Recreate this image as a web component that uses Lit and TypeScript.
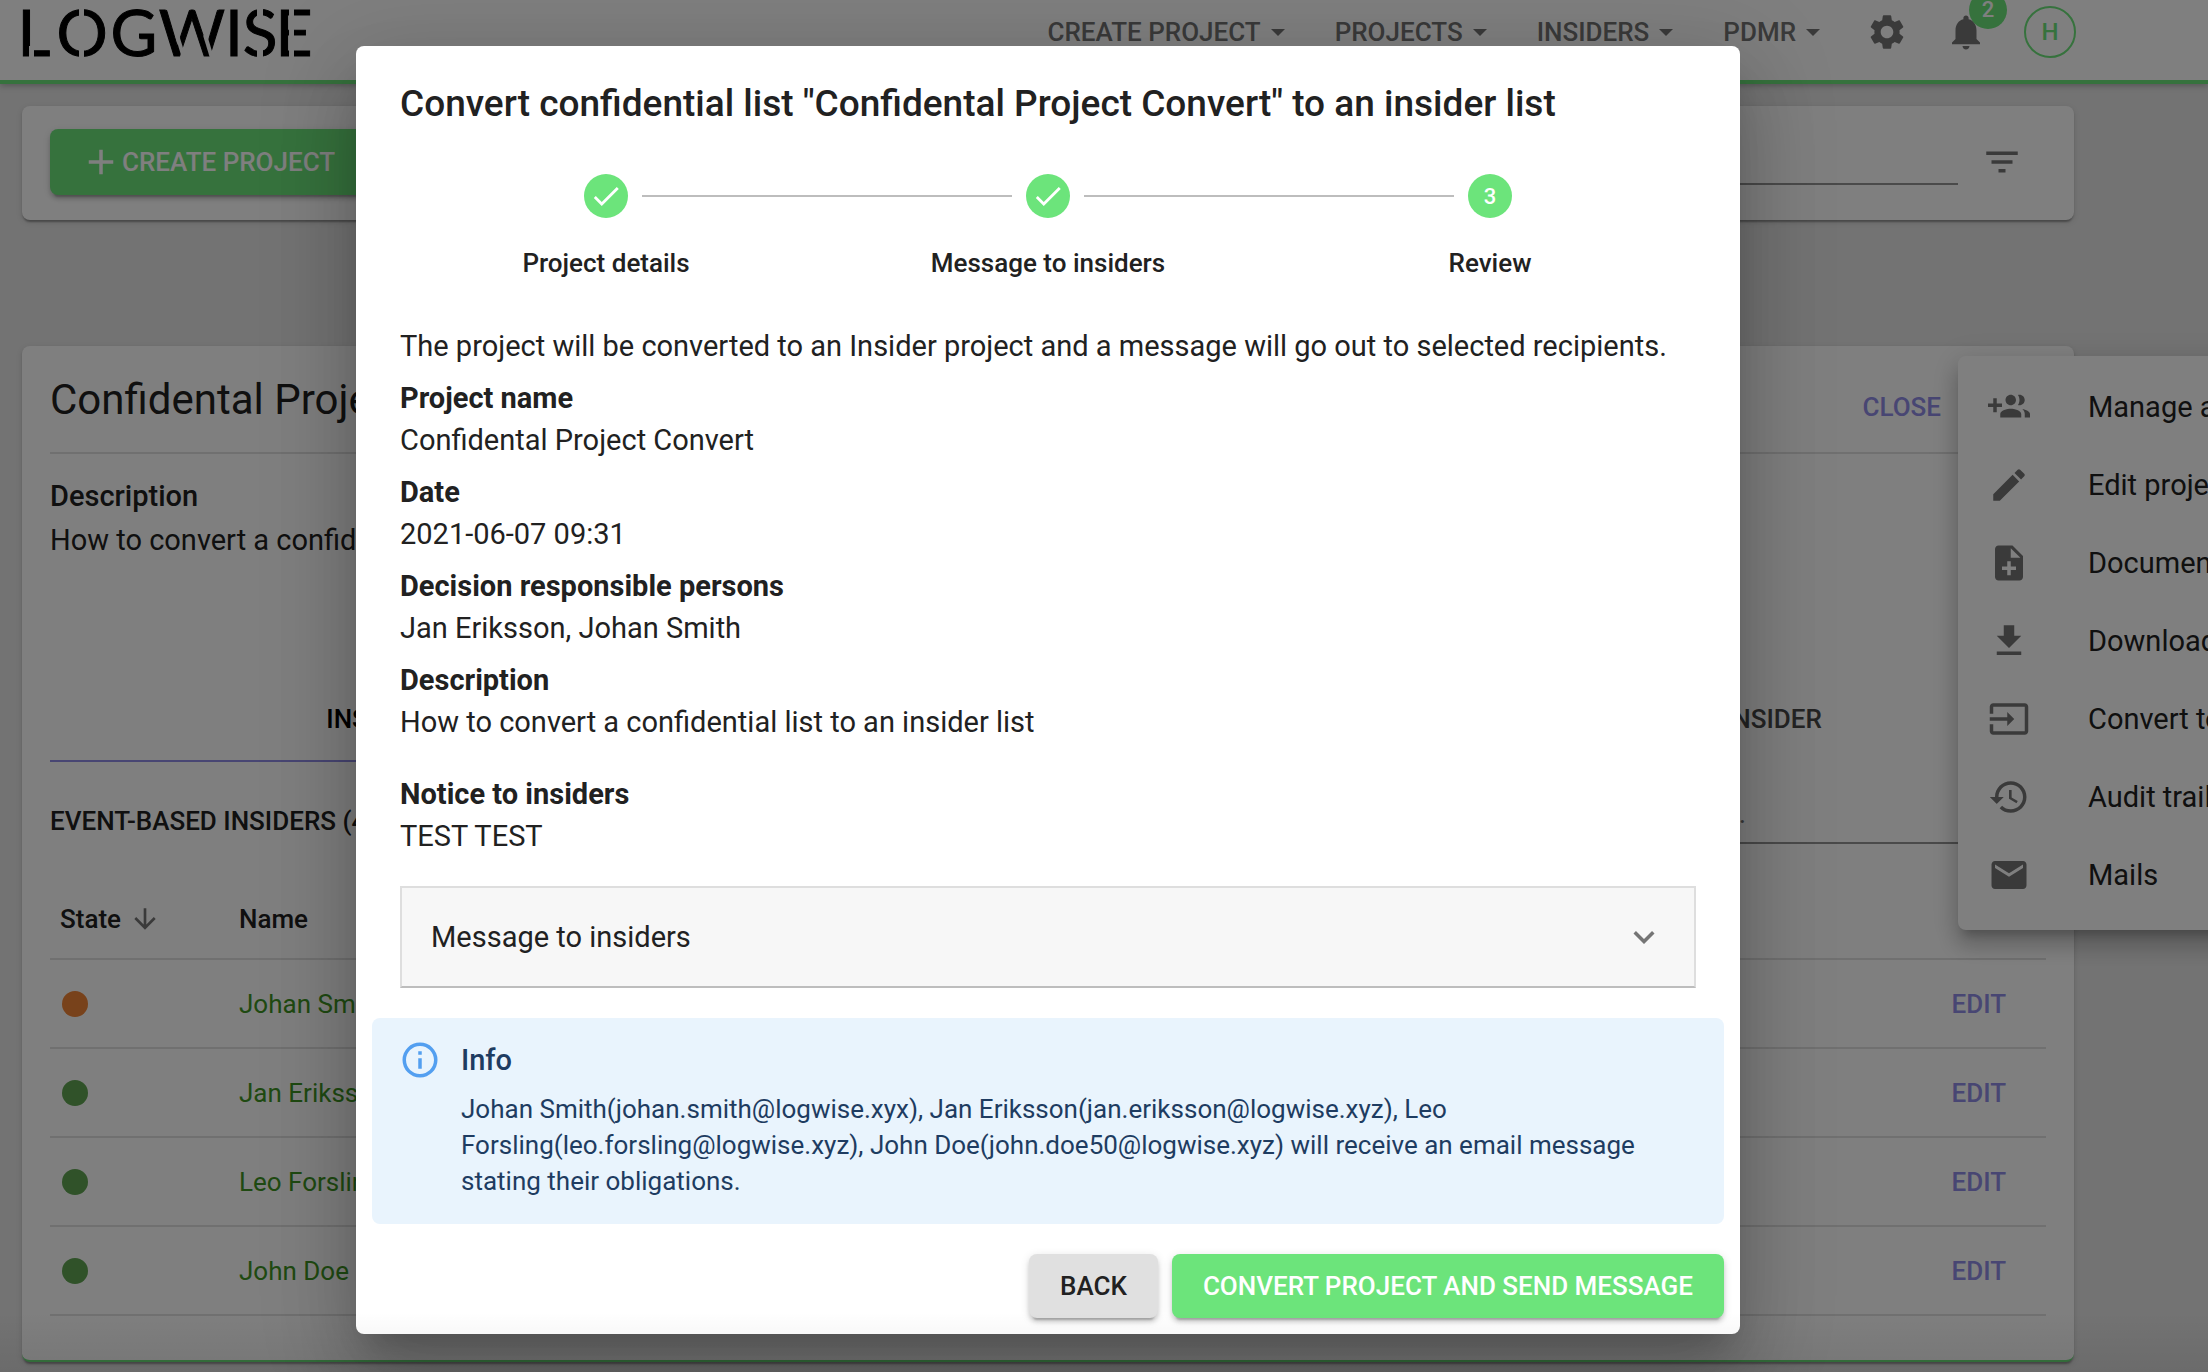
import { LitElement, html, css, svg, nothing } from "lit";
import { customElement, property, state } from "lit/decorators.js";
import { classMap } from "lit/directives/class-map.js";

const ICONS: Record<string, string> = {
  settings:
    "M19.14 12.94c.04-.3.06-.61.06-.94 0-.32-.02-.64-.07-.94l2.03-1.58c.18-.14.23-.41.12-.61l-1.92-3.32c-.12-.22-.37-.29-.59-.22l-2.39.96c-.5-.38-1.03-.7-1.62-.94l-.36-2.54c-.04-.24-.24-.41-.48-.41h-3.84c-.24 0-.43.17-.47.41l-.36 2.54c-.59.24-1.13.57-1.62.94l-2.39-.96c-.22-.08-.47 0-.59.22L2.74 8.87c-.12.21-.08.47.12.61l2.03 1.58c-.05.3-.09.63-.09.94s.02.64.07.94l-2.03 1.58c-.18.14-.23.41-.12.61l1.92 3.32c.12.22.37.29.59.22l2.39-.96c.5.38 1.03.7 1.62.94l.36 2.54c.05.24.24.41.48.41h3.84c.24 0 .44-.17.47-.41l.36-2.54c.59-.24 1.13-.56 1.62-.94l2.39.96c.22.08.47 0 .59-.22l1.92-3.32c.12-.22.07-.47-.12-.61l-2.01-1.58zM12 15.6c-1.98 0-3.6-1.62-3.6-3.6s1.62-3.6 3.6-3.6 3.6 1.62 3.6 3.6-1.62 3.6-3.6 3.6z",
  bell: "M12 22c1.1 0 2-.9 2-2h-4c0 1.1.89 2 2 2zm6-6v-5c0-3.07-1.64-5.64-4.5-6.32V4c0-.83-.67-1.5-1.5-1.5s-1.5.67-1.5 1.5v.68C7.63 5.36 6 7.92 6 11v5l-2 2v1h16v-1l-2-2z",
  add: "M19 13h-6v6h-2v-6H5v-2h6V5h2v6h6v2z",
  filter: "M10 18h4v-2h-4v2zM3 6v2h18V6H3zm3 7h12v-2H6v2z",
  check: "M9 16.2L4.8 12l-1.4 1.4L9 19 21 7l-1.4-1.4L9 16.2z",
  expand: "M16.59 8.59L12 13.17 7.41 8.59 6 10l6 6 6-6z",
  info: "M11,9H13V7H11M12,20C7.59,20 4,16.41 4,12C4,7.59 7.59,4 12,4C16.41,4 20,7.59 20,12C20,16.41 16.41,20 12,20M12,2A10,10 0 0,0 2,12A10,10 0 0,0 12,22A10,10 0 0,0 22,12A10,10 0 0,0 12,2M11,17H13V11H11V17Z",
  arrowDown: "M20 12l-1.41-1.41L13 16.17V4h-2v12.17l-5.58-5.59L4 12l8 8 8-8z",
  groupAdd:
    "M8 10H5V7H3v3H0v2h3v3h2v-3h3v-2zm10 1c1.66 0 2.99-1.34 2.99-3S19.66 5 18 5c-.32 0-.63.05-.91.14.57.81.9 1.79.9 2.86s-.34 2.04-.9 2.86c.28.09.59.14.91.14zm-5 0c1.66 0 2.99-1.34 2.99-3S14.66 5 13 5c-1.66 0-3 1.34-3 3s1.34 3 3 3zm6.62 2.16c.83.73 1.38 1.66 1.38 2.84v2h3v-2c0-1.54-2.37-2.49-4.38-2.84zM13 13c-2 0-6 1-6 3v2h12v-2c0-2-4-3-6-3z",
  edit: "M3 17.25V21h3.75L17.81 9.94l-3.75-3.75L3 17.25zM20.71 7.04c.39-.39.39-1.02 0-1.41l-2.34-2.34c-.39-.39-1.02-.39-1.41 0l-1.83 1.83 3.75 3.75 1.83-1.83z",
  noteAdd:
    "M14 2H6c-1.1 0-1.99.9-1.99 2L4 20c0 1.1.89 2 1.99 2H18c1.1 0 2-.9 2-2V8l-6-6zm2 14h-3v3h-2v-3H8v-2h3v-3h2v3h3v2zm-3-7V3.5L18.5 9H13z",
  download: "M19 9h-4V3H9v6H5l7 7 7-7zM5 18v2h14v-2H5z",
  convert:
    "M21 3.01H3c-1.1 0-2 .9-2 2V9h2V4.99h18v14.03H3V15H1v4.01c0 1.1.9 1.98 2 1.98h18c1.1 0 2-.88 2-1.98v-14c0-1.11-.9-2-2-2zM11 16l4-4-4-4v3H1v2h10v3z",
  history:
    "M13 3c-4.97 0-9 4.03-9 9H1l3.89 3.89.07.14L9 12H6c0-3.87 3.13-7 7-7s7 3.13 7 7-3.13 7-7 7c-1.93 0-3.68-.79-4.94-2.06l-1.42 1.42C8.27 19.99 10.51 21 13 21c4.97 0 9-4.03 9-9s-4.03-9-9-9zm-1 5v5l4.28 2.54.72-1.21-3.5-2.08V8H12z",
  mail: "M20 4H4c-1.1 0-1.99.9-1.99 2L2 18c0 1.1.9 2 2 2h16c1.1 0 2-.9 2-2V6c0-1.1-.9-2-2-2zm0 4l-8 5-8-5V6l8 5 8-5v2z",
};

const icon = (name: string, cls = "") =>
  html`<svg class="icon ${cls}" viewBox="0 0 24 24" aria-hidden="true">${svg`<path d=${ICONS[name]}></path>`}</svg>`;

const base = css`
  :host,
  * {
    box-sizing: border-box;
  }
  button {
    font: inherit;
    color: inherit;
    background: none;
    border: 0;
    padding: 0;
    margin: 0;
    cursor: pointer;
  }
  .icon {
    display: block;
    flex: none;
    width: 42px;
    height: 42px;
    fill: currentColor;
  }
  .raised {
    display: flex;
    align-items: center;
    justify-content: center;
    border-radius: 8px;
    font-size: 26px;
    font-weight: 500;
    white-space: nowrap;
    box-shadow: 0 6px 2px -4px rgba(0, 0, 0, 0.2), 0 4px 4px rgba(0, 0, 0, 0.14), 0 2px 10px rgba(0, 0, 0, 0.12);
  }
  .primary {
    background: #6ce47b;
    color: #fff;
  }
`;

@customElement("site-header")
class SiteHeader extends LitElement {
  static styles = [
    base,
    css`
      :host {
        display: block;
      }
      .bar {
        display: flex;
        align-items: center;
        height: 84px;
        padding: 0 132px 16px 16px;
        background: #fff;
        border-bottom: 4px solid #6ce47b;
        box-shadow: 0 2px 6px rgba(0, 0, 0, 0.25);
        color: #757575;
      }
      .logo {
        display: block;
        width: 300px;
        height: 64px;
      }
      .logo text {
        font-family: Lato, "Liberation Sans", sans-serif;
        font-size: 64px;
        text-anchor: middle;
        stroke: #000;
        stroke-width: 1;
      }
      .logo rect {
        fill: #fff;
      }
      .logo line {
        stroke: #fff;
        stroke-width: 4;
      }
      .nav {
        display: flex;
        gap: 50px;
        margin-left: auto;
      }
      .item {
        display: flex;
        align-items: center;
        gap: 10px;
        font-size: 26px;
        font-weight: 500;
      }
      .caret {
        width: 14px;
        height: 7px;
        fill: currentColor;
      }
      .tools {
        display: flex;
        align-items: center;
        gap: 37px;
        margin-left: 46px;
      }
      .bell {
        position: relative;
      }
      .badge {
        position: absolute;
        top: -20px;
        left: 24px;
        width: 38px;
        height: 38px;
        border-radius: 50%;
        background: #6ce47b;
        color: #fff;
        font-size: 22px;
        font-weight: 500;
        line-height: 38px;
        text-align: center;
      }
      .avatar {
        width: 52px;
        height: 52px;
        border: 2px solid #6ce47b;
        border-radius: 50%;
        color: #6ce47b;
        font-size: 24px;
        font-weight: 500;
      }
    `,
  ];

  private letters = [
    { glyph: "L", x: 18 },
    { glyph: "O", x: 66 },
    { glyph: "G", x: 118 },
    { glyph: "W", x: 176 },
    { glyph: "I", x: 218 },
    { glyph: "S", x: 244 },
    { glyph: "E", x: 278 },
  ];

  render() {
    return html`<header class="bar">
      <svg class="logo" viewBox="0 0 300 64" role="img" aria-label="Logwise">
        ${this.letters.map((l) => svg`<text x=${l.x} y="56">${l.glyph}</text>`)}
        <rect x="13" y="46" width="5" height="12"></rect>
        <rect x="63" y="6" width="5" height="54"></rect>
        <line x1="161" y1="35" x2="168" y2="58"></line>
        <line x1="189" y1="35" x2="196" y2="58"></line>
        <rect x="241" y="6" width="6" height="18"></rect>
        <rect x="241" y="43" width="6" height="17"></rect>
        <rect x="273" y="6" width="5" height="54"></rect>
      </svg>
      <nav class="nav">
        ${["CREATE PROJECT", "PROJECTS", "INSIDERS", "PDMR"].map(
          (label) => html`<button class="item">
            ${label}<svg class="caret" viewBox="0 0 14 7" aria-hidden="true"><path d="M0 0h14l-7 7z"></path></svg>
          </button>`
        )}
      </nav>
      <div class="tools">
        <button aria-label="Settings">${icon("settings")}</button>
        <button class="bell" aria-label="Notifications">${icon("bell")}<span class="badge">2</span></button>
        <button class="avatar">H</button>
      </div>
    </header>`;
  }
}

@customElement("project-menu")
class ProjectMenu extends LitElement {
  static styles = [
    base,
    css`
      :host {
        display: block;
        padding: 12px 0 16px;
        border-radius: 8px;
        background: #fff;
        box-shadow: 0 10px 10px -6px rgba(0, 0, 0, 0.2), 0 16px 20px 2px rgba(0, 0, 0, 0.14),
          0 6px 28px 4px rgba(0, 0, 0, 0.12);
      }
      .item {
        display: flex;
        align-items: center;
        gap: 58px;
        width: 100%;
        height: 78px;
        padding: 0 30px;
        font-size: 29px;
        white-space: nowrap;
      }
      .icon {
        color: #757575;
      }
    `,
  ];

  private items = [
    ["groupAdd", "Manage access"],
    ["edit", "Edit project"],
    ["noteAdd", "Documents"],
    ["download", "Download"],
    ["convert", "Convert to insider list"],
    ["history", "Audit trail"],
    ["mail", "Mails"],
  ];

  render() {
    return this.items.map(([glyph, label]) => html`<button class="item">${icon(glyph)}${label}</button>`);
  }
}

@customElement("project-page")
class ProjectPage extends LitElement {
  static styles = [
    base,
    css`
      :host {
        display: block;
        padding: 22px 134px 10px 22px;
      }
      .card {
        background: #fff;
        border-radius: 8px;
        box-shadow: 0 4px 2px -2px rgba(0, 0, 0, 0.2), 0 2px 2px rgba(0, 0, 0, 0.14), 0 2px 6px rgba(0, 0, 0, 0.12);
      }
      .toolbar {
        display: flex;
        align-items: center;
        justify-content: space-between;
        height: 114px;
        padding: 0 51px 2px 28px;
        margin-bottom: 126px;
      }
      .create {
        height: 66px;
        padding: 0 38px 0 30px;
      }
      .search {
        display: flex;
        align-items: center;
        gap: 23px;
      }
      .field {
        height: 46px;
        padding: 0;
        border: 0;
        border-bottom: 2px solid #949494;
        outline: 0;
        background: transparent;
        font: inherit;
        font-size: 28px;
      }
      .field::placeholder {
        color: #757575;
        opacity: 1;
      }
      .search .field {
        width: 420px;
      }
      .filter {
        color: #757575;
      }
      .project {
        padding: 0 28px 44px;
        border-bottom: 2px solid #6ce47b;
      }
      .head {
        position: relative;
        display: flex;
        align-items: center;
        justify-content: space-between;
        height: 108px;
        padding-right: 105px;
        border-bottom: 2px solid #e0e0e0;
      }
      .title {
        margin: 0;
        font-size: 42px;
        font-weight: 400;
      }
      .link {
        color: #908ce6;
        font-size: 26px;
        font-weight: 500;
      }
      .close {
        padding-top: 16px;
      }
      .menu {
        position: absolute;
        top: 10px;
        left: calc(100% - 88px);
        width: 440px;
      }
      .about {
        padding-top: 20px;
        line-height: 44px;
      }
      .about h3,
      .about p {
        margin: 0;
        font-size: 29px;
      }
      .about h3 {
        font-weight: 500;
      }
      .tabs {
        display: grid;
        grid-template-columns: repeat(3, 1fr);
        margin-top: 116px;
      }
      .tab {
        height: 84px;
        border-bottom: 2px solid transparent;
        color: #484848;
        font-size: 26px;
        font-weight: 500;
      }
      .tab.active {
        color: #000;
        border-color: #908ce6;
      }
      .list-head {
        display: flex;
        align-items: center;
        justify-content: space-between;
        margin: 36px 0;
      }
      .list-head h3 {
        margin: 0;
        font-size: 26px;
        font-weight: 500;
      }
      .list-head .field {
        width: 408px;
        padding-bottom: 14px;
      }
      .table {
        width: 100%;
        border-collapse: separate;
        border-spacing: 0;
        font-size: 26px;
      }
      .table th {
        height: 80px;
        font-weight: 500;
      }
      .table td {
        height: 89px;
      }
      .table th,
      .table td {
        padding: 0;
        border-bottom: 2px solid #e0e0e0;
        text-align: left;
      }
      .table .state {
        width: 189px;
        padding-left: 10px;
      }
      .table .act {
        padding-right: 40px;
        text-align: right;
      }
      .sort {
        display: flex;
        align-items: center;
        gap: 8px;
        font-weight: 500;
      }
      .sort .icon {
        width: 32px;
        height: 32px;
        color: #757575;
      }
      .dot {
        display: block;
        width: 26px;
        height: 26px;
        margin-left: 2px;
        border-radius: 50%;
        background: #60a452;
      }
      .dot.pending {
        background: #f08436;
      }
      .name {
        color: #3e9424;
        text-decoration: none;
      }
    `,
  ];

  private rows = [
    { name: "Johan Smith", pending: true },
    { name: "Jan Eriksson", pending: false },
    { name: "Leo Forsling", pending: false },
    { name: "John Doe", pending: false },
  ];

  render() {
    return html`
      <section class="card toolbar">
        <button class="raised primary create">${icon("add")}CREATE PROJECT</button>
        <div class="search">
          <input class="field" type="search" aria-label="Search projects" />
          <button class="filter" aria-label="Filter">${icon("filter")}</button>
        </div>
      </section>
      <section class="card project">
        <div class="head">
          <h2 class="title">Confidental Project Convert</h2>
          <button class="link close">CLOSE</button>
          <project-menu class="menu"></project-menu>
        </div>
        <div class="about">
          <h3>Description</h3>
          <p>How to convert a confidential list to an insider list</p>
        </div>
        <div class="tabs" role="tablist">
          <button class="tab active" role="tab" aria-selected="true">INSIDERS</button>
          <button class="tab" role="tab">MESSAGES</button>
          <button class="tab" role="tab">ADD NEW INSIDER</button>
        </div>
        <div class="list-head">
          <h3>EVENT-BASED INSIDERS (4)</h3>
          <input class="field" type="text" placeholder="Search..." aria-label="Search insiders" />
        </div>
        <table class="table">
          <thead>
            <tr>
              <th class="state"><button class="sort">State ${icon("arrowDown")}</button></th>
              <th>Name</th>
              <th class="act"></th>
            </tr>
          </thead>
          <tbody>
            ${this.rows.map(
              (row) => html`<tr>
                <td class="state"><span class=${classMap({ dot: true, pending: row.pending })}></span></td>
                <td><a class="name" href="#">${row.name}</a></td>
                <td class="act"><button class="link">EDIT</button></td>
              </tr>`
            )}
          </tbody>
        </table>
      </section>
    `;
  }
}

@customElement("progress-steps")
class ProgressSteps extends LitElement {
  @property({ type: Array }) steps: string[] = [];
  @property({ type: Number }) current = 0;

  static styles = [
    base,
    css`
      :host {
        display: block;
      }
      .steps {
        display: grid;
        grid-template-columns: repeat(3, 1fr);
        margin: 0;
        padding: 0;
        list-style: none;
      }
      .track {
        display: flex;
        align-items: center;
        gap: 14px;
      }
      .line {
        flex: 1;
        height: 2px;
        background: #bdbdbd;
      }
      .line.off {
        background: transparent;
      }
      .mark {
        display: flex;
        align-items: center;
        justify-content: center;
        width: 44px;
        height: 44px;
        border-radius: 50%;
        background: #6ce47b;
        color: #fff;
        font-size: 22px;
        font-weight: 500;
      }
      .mark .icon {
        width: 34px;
        height: 34px;
      }
      .label {
        margin-top: 27px;
        font-size: 26px;
        font-weight: 500;
        line-height: 36px;
        text-align: center;
      }
    `,
  ];

  render() {
    const last = this.steps.length - 1;
    return html`<ol class="steps">
      ${this.steps.map(
        (label, i) => html`<li>
          <div class="track">
            <span class=${classMap({ line: true, off: i === 0 })}></span>
            <span class="mark">${i < this.current ? icon("check") : i + 1}</span>
            <span class=${classMap({ line: true, off: i === last })}></span>
          </div>
          <div class="label">${label}</div>
        </li>`
      )}
    </ol>`;
  }
}

@customElement("convert-dialog")
class ConvertDialog extends LitElement {
  @state() private open = false;

  static styles = [
    base,
    css`
      :host {
        display: block;
        padding: 36px 16px 16px;
        border-radius: 8px;
        background: #fff;
        box-shadow: 0 22px 30px -14px rgba(0, 0, 0, 0.2), 0 48px 76px 6px rgba(0, 0, 0, 0.14),
          0 18px 92px 16px rgba(0, 0, 0, 0.12);
      }
      .title {
        margin: 0 28px;
        font-size: 37px;
        font-weight: 500;
        line-height: 44px;
      }
      .steps {
        margin: 48px 13px 44px;
      }
      .body {
        margin: 0 28px;
        font-size: 29px;
        line-height: 42px;
      }
      .intro {
        margin: 0 0 10px;
      }
      .facts {
        display: flex;
        flex-direction: column;
        gap: 10px;
        margin: 0;
      }
      .facts dt {
        font-weight: 700;
      }
      .facts dd {
        margin: 0;
      }
      .facts .notice {
        margin-top: 20px;
      }
      .accordion {
        display: flex;
        align-items: center;
        justify-content: space-between;
        width: 100%;
        min-height: 102px;
        margin: 29px 0 30px;
        padding: 0 29px;
        border: 2px solid #dedede;
        border-bottom-color: #bdbdbd;
        background: #f7f7f7;
        text-align: left;
      }
      .accordion .icon {
        color: #757575;
      }
      .info {
        display: flex;
        gap: 20px;
        padding: 21px 48px 25px 27px;
        border-radius: 8px;
        background: #e9f4fd;
        color: #1e3c61;
      }
      .info .icon {
        color: #539ff0;
      }
      .info h3 {
        margin: 0 0 10px;
        font-size: 29px;
        font-weight: 500;
        line-height: 42px;
      }
      .info p {
        margin: 0;
        font-size: 26px;
        line-height: 36px;
      }
      .actions {
        display: flex;
        justify-content: flex-end;
        gap: 14px;
        margin-top: 30px;
      }
      .actions .raised {
        height: 64px;
        padding: 0 31px;
      }
      .back {
        background: #e0e0e0;
      }
    `,
  ];

  private facts = [
    { label: "Project name", value: "Confidental Project Convert" },
    { label: "Date", value: "2021-06-07 09:31" },
    { label: "Decision responsible persons", value: "Jan Eriksson, Johan Smith" },
    { label: "Description", value: "How to convert a confidential list to an insider list" },
    { label: "Notice to insiders", value: "TEST TEST", notice: true },
  ];

  render() {
    return html`
      <h2 class="title">Convert confidential list "Confidental Project Convert" to an insider list</h2>
      <progress-steps
        class="steps"
        .steps=${["Project details", "Message to insiders", "Review"]}
        .current=${2}
      ></progress-steps>
      <div class="body">
        <p class="intro">
          The project will be converted to an Insider project and a message will go out to selected recipients.
        </p>
        <dl class="facts">
          ${this.facts.map(
            (f) => html`<div class=${f.notice ? "notice" : "fact"}>
              <dt>${f.label}</dt>
              <dd>${f.value}</dd>
            </div>`
          )}
        </dl>
        <button class="accordion" aria-expanded=${this.open} @click=${() => (this.open = !this.open)}>
          Message to insiders ${icon("expand")}
        </button>
        ${this.open ? html`<p class="intro">TEST TEST</p>` : nothing}
      </div>
      <section class="info">
        ${icon("info")}
        <div>
          <h3>Info</h3>
          <p>
            Johan Smith(johan.smith@logwise.xyx), Jan Eriksson(jan.eriksson@logwise.xyz), Leo
            Forsling(leo.forsling@logwise.xyz), John Doe(john.doe50@logwise.xyz) will receive an email message stating
            their obligations.
          </p>
        </div>
      </section>
      <div class="actions">
        <button class="raised back">BACK</button>
        <button class="raised primary">CONVERT PROJECT AND SEND MESSAGE</button>
      </div>
    `;
  }
}

@customElement("app-root")
class AppRoot extends LitElement {
  static styles = css`
    :host {
      display: block;
      position: relative;
      min-height: 100vh;
      overflow: hidden;
      background: #e6e6e6;
      color: #212121;
      font-family: Roboto, "Liberation Sans", sans-serif;
    }
    .backdrop {
      position: absolute;
      inset: 0;
      display: flex;
      align-items: flex-start;
      justify-content: center;
      padding: 46px 112px 0 0;
      background: rgba(0, 0, 0, 0.5);
    }
    .dialog {
      width: 67%;
      max-width: 1384px;
    }
    .fade {
      position: absolute;
      inset: auto 0 0;
      height: 60px;
      background: linear-gradient(transparent, rgba(0, 0, 0, 0.07));
      pointer-events: none;
    }
  `;

  render() {
    return html`
      <site-header></site-header>
      <project-page></project-page>
      <div class="backdrop">
        <convert-dialog class="dialog" role="dialog" aria-modal="true"></convert-dialog>
      </div>
      <div class="fade"></div>
    `;
  }
}
